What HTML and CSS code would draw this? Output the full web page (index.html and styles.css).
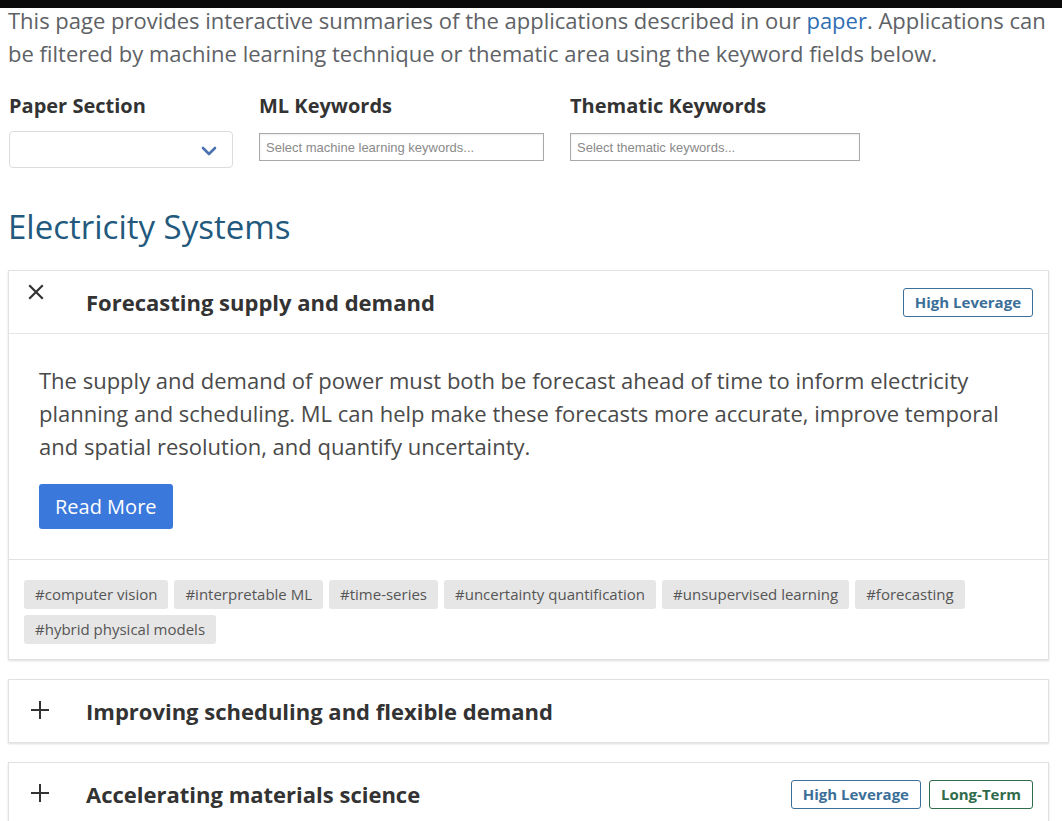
FILE: index.html
```html
<!DOCTYPE html>
<html lang="en">
<head>
<meta charset="utf-8">
<title>Applications</title>
<link rel="stylesheet" href="styles.css">
</head>
<body>
<div class="topbar"></div>
<main class="page">
  <p class="intro">This page provides interactive summaries of the applications described in our <a href="#">paper</a>. Applications can be filtered by machine learning technique or thematic area using the keyword fields below.</p>

  <div class="filters">
    <div class="filter filter-section">
      <label class="filter-label">Paper Section</label>
      <div class="select">
        <svg class="chev" width="16" height="10" viewBox="0 0 16 10"><path d="M2 2 L8 8 L14 2" fill="none" stroke="#4a72b0" stroke-width="2.6" stroke-linecap="round" stroke-linejoin="round"/></svg>
      </div>
    </div>
    <div class="filter filter-ml">
      <label class="filter-label">ML Keywords</label>
      <input class="kw" type="text" placeholder="Select machine learning keywords...">
    </div>
    <div class="filter filter-th">
      <label class="filter-label">Thematic Keywords</label>
      <input class="kw" type="text" placeholder="Select thematic keywords...">
    </div>
  </div>

  <h2 class="section-title">Electricity Systems</h2>

  <div class="card open">
    <div class="card-head">
      <span class="toggle close">
        <svg width="16" height="16" viewBox="0 0 16 16"><path d="M2 2 L14 14 M14 2 L2 14" stroke="#333" stroke-width="2.2" stroke-linecap="square"/></svg>
      </span>
      <h3 class="card-title">Forecasting supply and demand</h3>
      <div class="badges"><span class="badge blue">High Leverage</span></div>
    </div>
    <div class="card-body">
      <p>The supply and demand of power must both be forecast ahead of time to inform electricity planning and scheduling. ML can help make these forecasts more accurate, improve temporal and spatial resolution, and quantify uncertainty.</p>
      <button class="btn">Read More</button>
    </div>
    <div class="card-foot">
      <span class="tag">#computer vision</span>
      <span class="tag">#interpretable ML</span>
      <span class="tag">#time-series</span>
      <span class="tag">#uncertainty quantification</span>
      <span class="tag">#unsupervised learning</span>
      <span class="tag">#forecasting</span>
      <span class="tag">#hybrid physical models</span>
    </div>
  </div>

  <div class="card">
    <div class="card-head">
      <span class="toggle plus">
        <svg width="20" height="20" viewBox="0 0 20 20"><path d="M10 1 V19 M1 10 H19" stroke="#333" stroke-width="2"/></svg>
      </span>
      <h3 class="card-title">Improving scheduling and flexible demand</h3>
    </div>
  </div>

  <div class="card">
    <div class="card-head">
      <span class="toggle plus">
        <svg width="20" height="20" viewBox="0 0 20 20"><path d="M10 1 V19 M1 10 H19" stroke="#333" stroke-width="2"/></svg>
      </span>
      <h3 class="card-title">Accelerating materials science</h3>
      <div class="badges"><span class="badge blue">High Leverage</span><span class="badge green">Long-Term</span></div>
    </div>
  </div>
</main>
</body>
</html>
```

FILE: styles.css
```css
html, body {
  margin: 0;
  padding: 0;
  background: #fff;
}
body {
  font-family: "Open Sans", "DejaVu Sans", sans-serif;
  color: #444;
  overflow: hidden;
}
.topbar {
  position: fixed;
  top: 0;
  left: 0;
  right: 0;
  height: 8px;
  background: #0a0a0a;
  z-index: 10;
}
.page {
  margin-left: 8px;
  width: 1041px;
  padding-top: 4px;
}
.intro {
  margin: 0;
  font-size: 22px;
  line-height: 33px;
  color: #5e6266;
}
.intro a {
  color: #2f6eb3;
  text-decoration: none;
}
.filters {
  display: flex;
  margin-top: 21px;
}
.filter {
  display: flex;
  flex-direction: column;
}
.filter-section { width: 250px; }
.filter-ml { width: 311px; }
.filter-th { width: 291px; }
.filter-label {
  font-size: 20px;
  line-height: 30px;
  font-weight: 700;
  color: #333;
  padding-left: 1px;
}
.select {
  margin-top: 10px;
  width: 224px;
  height: 37px;
  box-sizing: border-box;
  border: 1px solid #dcdcdc;
  border-radius: 4px;
  display: flex;
  align-items: center;
  justify-content: flex-end;
  padding-right: 15px;
  margin-left: 1px;
}
.chev { display: block; margin-top: 3px; }
.kw {
  margin-top: 12px;
  height: 28px;
  box-sizing: border-box;
  border: 1px solid #a9a9a9;
  border-radius: 0;
  padding: 0 6px;
  font-family: "Liberation Sans", Arial, sans-serif;
  font-size: 13px;
  color: #333;
  box-shadow: inset 0 1px 2px rgba(0,0,0,0.08);
  outline: none;
}
.filter-ml .kw { width: 285px; margin-left: 1px; }
.filter-th .kw { width: 290px; margin-left: 1px; }
.kw::placeholder { color: #8a8a8a; }
.section-title {
  margin: 37px 0 0 0;
  font-size: 33px;
  line-height: 44px;
  font-weight: 400;
  color: #22597c;
}
.card {
  margin-top: 19px;
  border: 1px solid #e2e2e2;
  background: #fff;
  box-shadow: 0 1px 2px rgba(0,0,0,0.14);
}
.section-title + .card { margin-top: 21px; }
.card-head {
  display: flex;
  align-items: center;
  height: 62px;
  padding: 0 15px 0 0;
}
.open .card-head {
  border-bottom: 1px solid #e6e6e6;
}
.toggle {
  width: 77px;
  display: flex;
  justify-content: flex-start;
}
.toggle.close {
  align-self: flex-start;
  padding-top: 13px;
  padding-left: 19px;
  width: 58px;
}
.toggle.plus {
  padding-left: 21px;
  width: 56px;
  margin-top: -3px;
}
.toggle svg { display: block; }
.card-title {
  margin: 0;
  flex: 1;
  font-size: 22px;
  line-height: 30px;
  font-weight: 700;
  color: #333;
}
.badges {
  display: flex;
  gap: 8px;
}
.badge {
  display: inline-block;
  border: 1px solid;
  border-radius: 3px;
  padding: 0 11px;
  height: 29px;
  line-height: 27px;
  box-sizing: border-box;
  font-size: 15px;
  font-weight: 700;
}
.badge.blue { color: #3b6f98; border-color: #3b6f98; }
.badge.green { color: #2f6b4b; border-color: #2f6b4b; }
.card-body {
  padding: 30px 30px 30px 30px;
  border-bottom: 1px solid #e2e2e2;
}
.card-body p {
  margin: 0;
  font-size: 22px;
  line-height: 33px;
  color: #4a4a4a;
}
.btn {
  margin-top: 21px;
  display: block;
  height: 45px;
  padding: 0 16px;
  border: none;
  border-radius: 3px;
  background: #3b78dc;
  color: #fff;
  font-family: "Open Sans", sans-serif;
  font-size: 20px;
}
.card-foot {
  display: flex;
  flex-wrap: wrap;
  gap: 6px 6px;
  padding: 20px 15px 15px 15px;
}
.tag {
  display: inline-block;
  height: 29px;
  line-height: 29px;
  padding: 0 11px;
  background: #e6e6e6;
  border-radius: 3px;
  font-size: 15px;
  color: #555;
}
```
